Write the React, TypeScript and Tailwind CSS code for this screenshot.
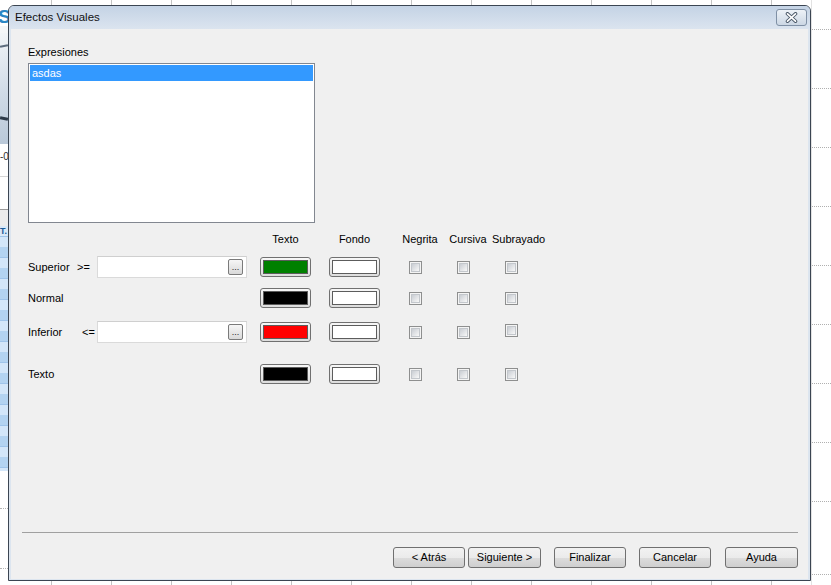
import React from 'react';

const rows = [
  { label: 'Superior', op: '>=', opPad: 'pl-0', input: true, text: 'bg-[#008000]', lift: false },
  { label: 'Normal', op: '', opPad: 'pl-0', input: false, text: 'bg-[#000000]', lift: false },
  { label: 'Inferior', op: '<=', opPad: 'pl-[5px]', input: true, text: 'bg-[#ff0000]', lift: true },
  { label: 'Texto', op: '', opPad: 'pl-0', input: false, text: 'bg-[#000000]', lift: false },
];

const rowGaps = ['mt-[10px]', 'mt-[9px]', 'mt-[12px]', 'mt-[20px]'];

const buttons = [
  { label: '< Atrás', cls: 'w-[72px]' },
  { label: 'Siguiente >', cls: 'w-[73px] ml-[3px]' },
  { label: 'Finalizar', cls: 'w-[72px] ml-[13px]' },
  { label: 'Cancelar', cls: 'w-[72px] ml-[13px]' },
  { label: 'Ayuda', cls: 'w-[73px] ml-[14px]' },
];

function ColorButton({ fill }: { fill: string }) {
  return (
    <div className="w-[51px] h-[20px] rounded-[3px] border border-[#707070] bg-[linear-gradient(#f7f7f7,#dddddd)] p-[2px]">
      <div className={`w-full h-full border border-[#5c5c5c] ${fill}`} />
    </div>
  );
}

function CheckBox({ extra = '' }: { extra?: string }) {
  return (
    <div className={`w-[13px] h-[13px] border border-[#8e8f8f] bg-[#f4f4f4] p-[1px] ${extra}`}>
      <div className="w-full h-full border border-[#c3c7cc] bg-[linear-gradient(135deg,#c9cdd3,#f8f8f8)]" />
    </div>
  );
}

function InputBox() {
  return (
    <div className="w-[150px] h-[22px] bg-white border border-[#dadada] border-t-[#cfcfcf] flex items-center justify-end pr-[3px]">
      <div className="w-[15px] h-[16px] rounded-[2px] border border-[#7a7a7a] bg-[linear-gradient(#f6f6f6,#d9d9d9)] flex items-end justify-center pb-[2px] text-[9px] leading-none text-[#222]">
        ...
      </div>
    </div>
  );
}

function LeftStrip() {
  return (
    <div className="w-[8px] h-[585px] flex flex-col overflow-hidden bg-white">
      <div className="h-[7px]" />
      <div className="h-[19px] text-[19px] leading-[19px] font-bold text-[#2a86c4] -ml-[2px]">S</div>
      <div className="h-[7px] bg-[#f4f6f8]" />
      <div className="h-[111px] bg-[linear-gradient(160deg,#f2f5f8,#cfdae6_55%,#b9c8d8)] flex flex-col">
        <div className="h-[12px]" />
        <div className="h-[2px] bg-[#5d6d7e] -rotate-12" />
        <div className="h-[70px]" />
        <div className="h-[3px] bg-[#2d3a48] rotate-12" />
      </div>
      <div className="h-[8px] bg-white" />
      <div className="h-[10px] text-[10px] leading-[10px] text-[#333] whitespace-nowrap">-0</div>
      <div className="h-[15px] bg-white border-b border-[#d5d5d5]" />
      <div className="h-[33px] bg-white border-b border-[#9a9a9a]" />
      <div className="h-[16px] bg-[#ececec]" />
      <div className="h-[10px] bg-[#d9e8f7] text-[9px] leading-[10px] font-bold text-[#1c5c98] whitespace-nowrap">T.</div>
      <div className="h-[235px] bg-[repeating-linear-gradient(#9fc4ea_0_1px,#d3e6f9_1px_11px,#b3d3f1_11px_21px)]" />
      <div className="h-[37px]" />
      <div className="border-t border-dotted border-[#b5b5b5]" />
      <div className="h-[59px]" />
      <div className="border-t border-dotted border-[#b5b5b5]" />
    </div>
  );
}

function RightStrip() {
  const gaps = ['h-[29px]', 'h-[58px]', 'h-[58px]', 'h-[58px]', 'h-[58px]', 'h-[58px]', 'h-[58px]', 'h-[58px]', 'h-[58px]', 'h-[72px]'];
  return (
    <div className="w-[20px] h-[585px] flex flex-col bg-white border-l border-[#e2e2e2]">
      {gaps.map((g, i) => (
        <React.Fragment key={i}>
          <div className={g} />
          <div className="border-t border-dotted border-[#b0b0b0]" />
        </React.Fragment>
      ))}
    </div>
  );
}

export default function App() {
  return (
    <div className="w-[831px] h-[585px] overflow-hidden bg-white flex font-['Liberation_Sans',Arial,sans-serif] text-[11px] text-black">
      <LeftStrip />

      <div className="w-[803px] flex flex-col">
        <div className="h-[5px] bg-[repeating-linear-gradient(90deg,transparent_0_43px,#c4c4c4_43px_44px,transparent_44px_60px)]" />

        <div className="h-[576px] rounded-t-[6px] border border-[#3b4552] bg-[#dce5ef] flex flex-col">
          {/* title bar */}
          <div className="h-[23px] rounded-t-[5px] bg-[linear-gradient(#c4d3e5,#dbe4ef)] flex items-center justify-between pl-[6px] pr-[3px]">
            <span className="text-[11.5px] text-[#111]">Efectos Visuales</span>
            <div className="w-[31px] h-[17px] rounded-[3px] border border-[#7f90a5] bg-[linear-gradient(#edf2f7,#ccd7e4)] flex items-center justify-center">
              <svg width="13" height="11" viewBox="0 0 13 11">
                <path d="M2.5 1.8 L10.5 9.2 M10.5 1.8 L2.5 9.2" stroke="#4a5868" strokeWidth="3.6" strokeLinecap="round" fill="none" />
                <path d="M2.5 1.8 L10.5 9.2 M10.5 1.8 L2.5 9.2" stroke="#ffffff" strokeWidth="1.7" strokeLinecap="round" fill="none" />
              </svg>
            </div>
          </div>

          {/* body */}
          <div className="mx-[2px] mb-[1px] h-[550px] bg-[#f0f0f0] flex flex-col pt-[17px] pb-[11px]">
            <div className="pl-[17px] h-[13px] leading-[13px]">Expresiones</div>
            <div className="ml-[17px] mt-[4px] w-[287px] h-[160px] border border-[#828790] bg-white p-[1px]">
              <div className="h-[16px] bg-[#3399ff] text-white pl-[2px] leading-[16px]">asdas</div>
            </div>

            {/* header */}
            <div className="mt-[10px] h-[13px] leading-[13px] flex whitespace-nowrap">
              <div className="ml-[249px] w-[51px] text-center">Texto</div>
              <div className="ml-[18px] w-[51px] text-center">Fondo</div>
              <div className="ml-[16px] w-[48px] text-center">Negrita</div>
              <div className="w-[48px] text-center">Cursiva</div>
              <div className="w-[52px] text-center">Subrayado</div>
            </div>

            {rows.map((r, i) => (
              <div key={r.label} className={`${rowGaps[i]} h-[22px] flex items-center pl-[17px]`}>
                <div className="w-[49px]">{r.label}</div>
                <div className={`w-[20px] ${r.opPad}`}>{r.op}</div>
                {r.input ? <InputBox /> : <div className="w-[150px]" />}
                <div className="ml-[13px]">
                  <ColorButton fill={r.text} />
                </div>
                <div className="ml-[18px]">
                  <ColorButton fill="bg-white" />
                </div>
                <CheckBox extra="ml-[29px] mt-[1px]" />
                <CheckBox extra="ml-[35px] mt-[1px]" />
                <CheckBox extra={r.lift ? 'ml-[35px] mb-[4px]' : 'ml-[35px] mt-[1px]'} />
              </div>
            ))}

            <div className="flex-1" />

            <div className="ml-[11px] mr-[10px] h-[1px] bg-[#a0a0a0]" />

            <div className="mt-[14px] flex justify-end pr-[10px]">
              {buttons.map((b) => (
                <div
                  key={b.label}
                  className={`${b.cls} h-[21px] rounded-[3px] border border-[#707070] bg-[linear-gradient(#f2f2f2,#ebebeb_50%,#dddddd_51%,#cfcfcf)] flex items-center justify-center whitespace-nowrap`}
                >
                  {b.label}
                </div>
              ))}
            </div>
          </div>
        </div>

        <div className="h-[4px] bg-[repeating-linear-gradient(90deg,transparent_0_43px,#c4c4c4_43px_44px,transparent_44px_60px)]" />
      </div>

      <RightStrip />
    </div>
  );
}
